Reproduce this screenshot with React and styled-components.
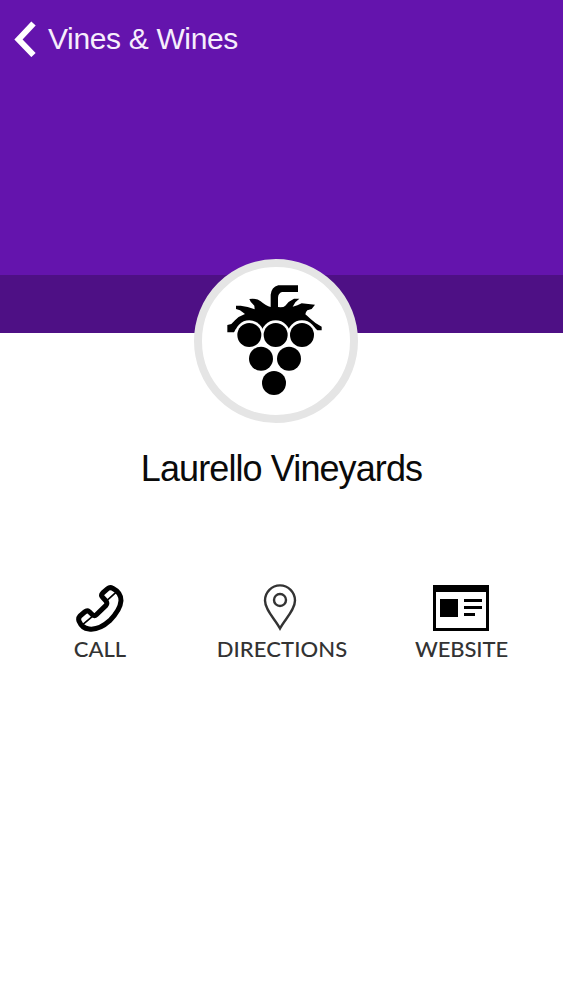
import React from 'react';
import styled, { createGlobalStyle } from 'styled-components';

const GlobalStyle = createGlobalStyle`
  body {
    margin: 0;
    background: #fff;
    font-family: "Liberation Sans", Arial, sans-serif;
  }
`;

const Page = styled.main`
  display: flex;
  flex-direction: column;
  align-items: center;
  width: 563px;
  height: 1000px;
  overflow: hidden;
`;

const Hero = styled.header`
  box-sizing: border-box;
  width: 100%;
  height: 333px;
  padding: 20px 14px 0;
  background: #6414ad;
  border-bottom: 58px solid #4e1085;
`;

const BackButton = styled.button`
  display: flex;
  align-items: center;
  gap: 12px;
  height: 38px;
  padding: 0;
  border: 0;
  background: none;
  color: #f6eefc;
  font: 30px/38px "Liberation Sans", Arial, sans-serif;
  letter-spacing: -0.35px;
  white-space: nowrap;
`;

const Avatar = styled.div`
  box-sizing: border-box;
  display: flex;
  justify-content: center;
  width: 164px;
  height: 164px;
  margin: -74px 11px 0 0;
  padding: 16px 2px 0 0;
  border: 8px solid #e5e5e5;
  border-radius: 50%;
  background: #fff;
`;

const Name = styled.h1`
  margin: 25px 0 0;
  color: #0a0a0a;
  font-size: 36px;
  font-weight: normal;
  line-height: 42px;
  letter-spacing: -0.9px;
  white-space: nowrap;
`;

const Actions = styled.nav`
  display: grid;
  grid-template-columns: 182px 182px 177px;
  width: 541px;
  margin: 94px 0 0 -4px;
`;

const Action = styled.a`
  display: flex;
  flex-direction: column;
  align-items: center;
  color: #333;
  font-family: Lato, sans-serif;
  font-size: 22px;
  font-weight: 500;
  line-height: 26px;
  letter-spacing: ${({ $tracking }) => $tracking || '0'};
`;

const IconBox = styled.span`
  display: flex;
  align-items: center;
  justify-content: center;
  height: 48px;
  margin-bottom: 4px;
  padding-right: ${({ $inset }) => $inset || '0'};
`;

const grapes = [[193, 256], [272, 256], [351, 256], [228, 327], [312, 327], [267, 400]];

const BackIcon = () => (
  <svg width="22" height="36" viewBox="0 0 22 36" fill="none" stroke="#fff" strokeWidth="6">
    <path d="M19.5 2.5 4.5 18.5 19.5 34" />
  </svg>
);

const GrapesIcon = () => (
  <svg width="100" height="114" viewBox="120 100 300 342">
    <path d="M127 226 139 223 150 212Q162 199 180 193L165 182 153 178V168H167Q188 170 209 179L208 168 197 156 193 148Q215 145 227 155 243 169 257 172V135Q259 113 280 107H339V127H291Q279 131 279 145V172Q295 174 301 168 311 154 327 147H343L331 158 323 171Q338 168 350 161L390 165 380 178 367 182Q361 188 361 194 368 200 377 208 390 221 410 231V242H397L387 232 340 240H170L153 237 147 248H127Z" />
    {grapes.slice(0, 3).map(([x, y]) => <circle key={x} cx={x} cy={y} r="44" fill="#fff" />)}
    {grapes.map(([x, y]) => <circle key={`${x}-${y}`} cx={x} cy={y} r="36" />)}
  </svg>
);

const PhoneIcon = () => (
  <svg width="50" height="48" viewBox="15 12 150 144" fill="none" stroke="#000" strokeWidth="15" strokeLinejoin="round">
    <path d="M97 51Q92 45 98 39L113 26Q120 20 128 25 153 38 153 62 151 90 119 122 87 151 57 147 36 145 27 123 24 115 30 108L44 96Q51 90 58 95L68 105Q74 109 79 104L108 76Q113 70 108 63Z" />
    <path d="M107 65 137 38M38 134 70 107" strokeWidth="5" />
  </svg>
);

const PinIcon = () => (
  <svg width="34" height="48" viewBox="0 0 34 48" fill="none" stroke="#333" strokeWidth="2.4">
    <path d="M17 44.5C12 35 2 26 2 16.4a15 15 0 0 1 30 0C32 26 22 35 17 44.5Z" />
    <circle cx="17" cy="16" r="6" />
  </svg>
);

const WebsiteIcon = () => (
  <svg width="56" height="46" viewBox="0 0 56 46" shapeRendering="crispEdges">
    <path fillRule="evenodd" d="M0 0H56V46H0ZM3 7V43H53V7Z" />
    <path d="M7 14H25V32H7ZM31 14H49V17H31ZM31 21H49V24H31ZM31 28H42V31H31Z" />
  </svg>
);

export default () => (
  <Page>
    <GlobalStyle />
    <Hero>
      <BackButton><BackIcon />Vines &amp; Wines</BackButton>
    </Hero>
    <Avatar><GrapesIcon /></Avatar>
    <Name>Laurello Vineyards</Name>
    <Actions>
      <Action><IconBox><PhoneIcon /></IconBox>CALL</Action>
      <Action $tracking="0.1px"><IconBox $inset="4px"><PinIcon /></IconBox>DIRECTIONS</Action>
      <Action $tracking="-0.1px"><IconBox $inset="2px"><WebsiteIcon /></IconBox>WEBSITE</Action>
    </Actions>
  </Page>
);
